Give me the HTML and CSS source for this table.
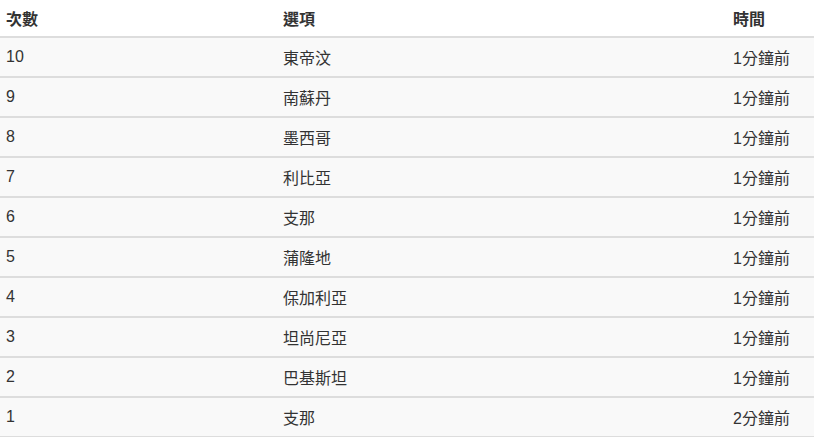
FILE: index.html
```html
<!DOCTYPE html>
<html lang="zh-Hant">
<head>
<meta charset="utf-8">
<title>投票紀錄</title>
<link rel="stylesheet" href="styles.css">
</head>
<body>
<table class="log">
  <colgroup>
    <col class="c-num">
    <col class="c-opt">
    <col class="c-time">
  </colgroup>
  <thead>
    <tr><th>次數</th><th>選項</th><th>時間</th></tr>
  </thead>
  <tbody>
    <tr><td>10</td><td>東帝汶</td><td>1分鐘前</td></tr>
    <tr><td>9</td><td>南蘇丹</td><td>1分鐘前</td></tr>
    <tr><td>8</td><td>墨西哥</td><td>1分鐘前</td></tr>
    <tr><td>7</td><td>利比亞</td><td>1分鐘前</td></tr>
    <tr><td>6</td><td>支那</td><td>1分鐘前</td></tr>
    <tr><td>5</td><td>蒲隆地</td><td>1分鐘前</td></tr>
    <tr><td>4</td><td>保加利亞</td><td>1分鐘前</td></tr>
    <tr><td>3</td><td>坦尚尼亞</td><td>1分鐘前</td></tr>
    <tr><td>2</td><td>巴基斯坦</td><td>1分鐘前</td></tr>
    <tr><td>1</td><td>支那</td><td>2分鐘前</td></tr>
  </tbody>
</table>
</body>
</html>
```
FILE: styles.css
```css
html, body {
  margin: 0;
  padding: 0;
  background: #fff;
}
body {
  font-family: "Liberation Sans", "Noto Sans CJK TC", sans-serif;
  font-size: 16px;
  color: #333;
}
.log {
  width: 814px;
  border-collapse: collapse;
  table-layout: fixed;
}
.c-num { width: 277px; }
.c-opt { width: 450px; }
.c-time { width: 87px; }
.log th,
.log td {
  text-align: left;
  padding: 0 0 0 6px;
  vertical-align: middle;
  white-space: nowrap;
}
.log th {
  height: 36px;
  font-weight: bold;
  color: #333;
  border-bottom: 2px solid #ddd;
}
.log td {
  height: 38px;
  background: #f9f9f9;
  border-bottom: 2px solid #ddd;
}
```
